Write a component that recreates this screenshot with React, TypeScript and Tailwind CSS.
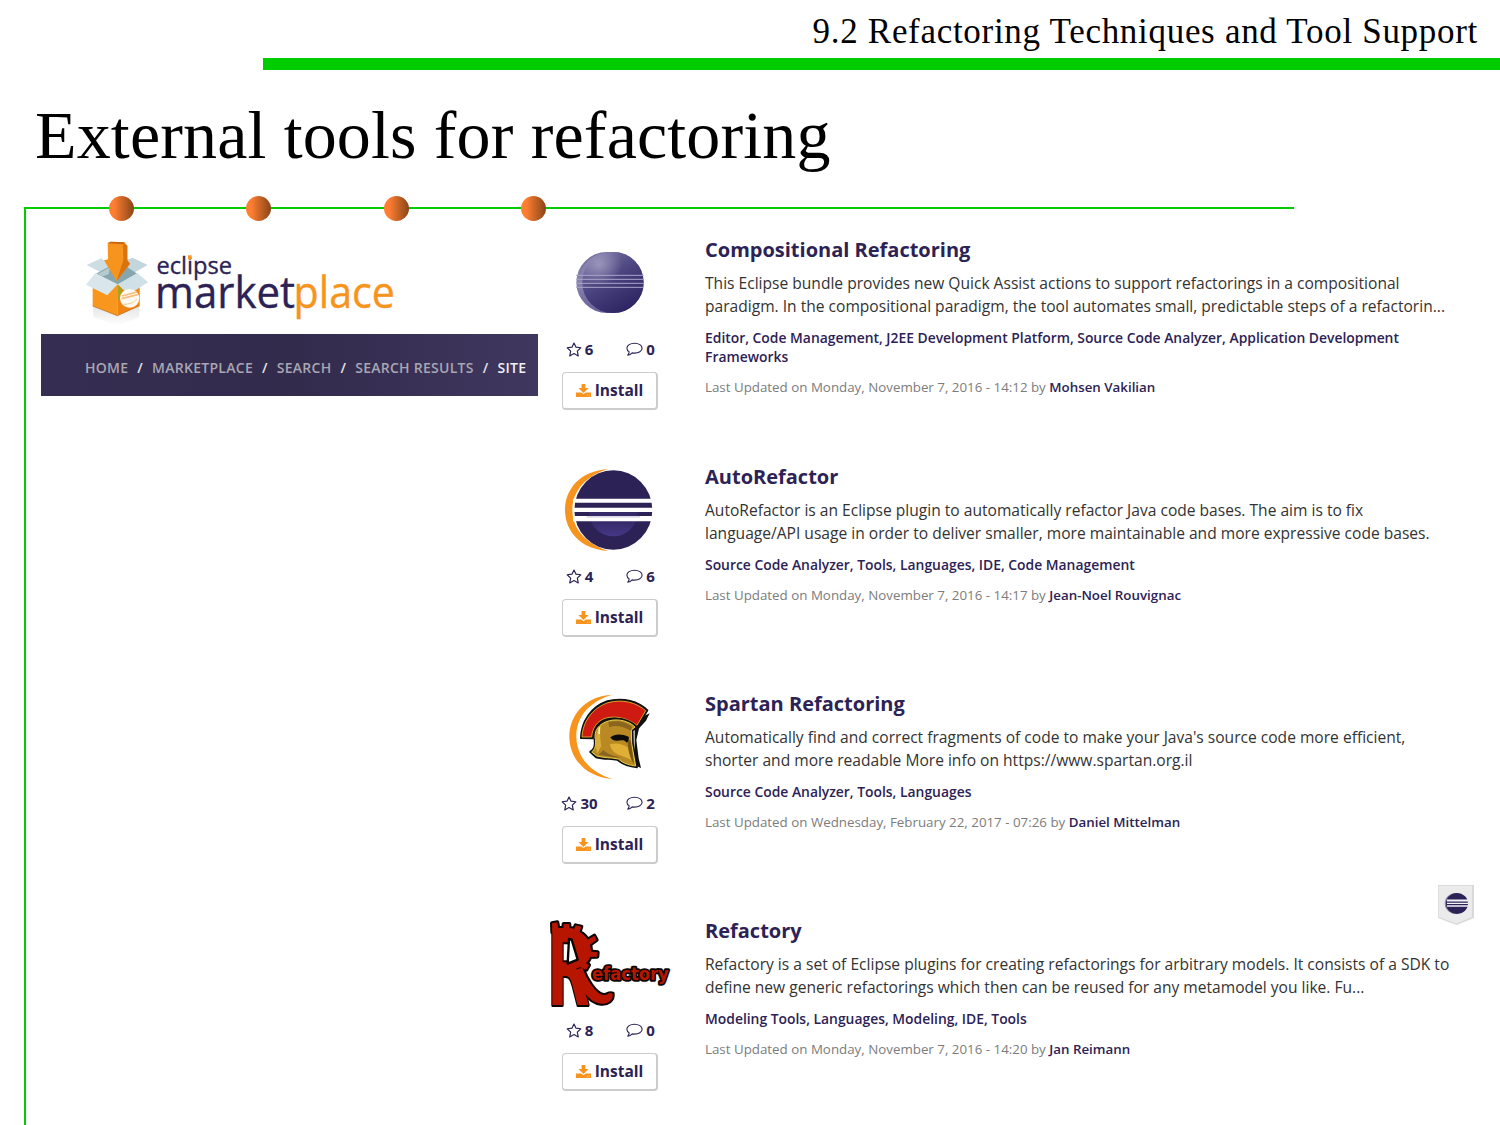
import type { ReactNode } from "react";

const StarIcon = () => (
  <svg viewBox="0 0 15 14" className="h-[15px] w-4" fill="none" stroke="#2c2255" strokeWidth="1.1" strokeLinejoin="round">
    <path d="M7.5 0.9 L9.4 4.8 L13.9 5.4 L10.6 8.5 L11.5 13 L7.5 10.8 L3.5 13 L4.4 8.5 L1.1 5.4 L5.6 4.8 Z" />
  </svg>
);

const CommentIcon = () => (
  <svg viewBox="0 0 17 14" className="h-[14px] w-[17px]" fill="none" stroke="#2c2255" strokeWidth="1.1" strokeLinejoin="round">
    <path d="M8.5 1.2 C12.8 1.2 16.1 3.4 16.1 6.2 C16.1 9 12.8 11.1 8.5 11.1 C7.7 11.1 6.9 11 6.2 10.9 C5 12.2 3.6 13 1.8 13.2 C2.6 12.2 3.1 11.2 3.2 9.9 C1.7 8.9 0.9 7.7 0.9 6.2 C0.9 3.4 4.2 1.2 8.5 1.2 Z" />
  </svg>
);

const DownloadIcon = () => (
  <svg viewBox="0 0 15 13" className="h-[13px] w-[15px]" fill="#f7941e">
    <path d="M5.6 0 H9.4 V4 H12.6 L7.5 9 L2.4 4 H5.6 Z" />
    <path d="M0 8.4 H5.4 L7.5 10.2 L9.6 8.4 H15 V13 H0 Z" />
    <path d="M10.9 10.8 h0.8 v0.8 h-0.8 z M12.9 10.8 h0.8 v0.8 h-0.8 z" fill="#fff" />
  </svg>
);

const CompositionalLogo = () => (
  <svg viewBox="12 9 366 300" className="h-[100px] w-[122px]">
    <defs>
      <linearGradient id="orb" x1="0.15" y1="0" x2="0.75" y2="1">
        <stop offset="0" stopColor="#7d78a6" />
        <stop offset="0.45" stopColor="#4b4580" />
        <stop offset="1" stopColor="#2b2160" />
      </linearGradient>
      <radialGradient id="orbShine" cx="0.32" cy="0.2" r="0.35">
        <stop offset="0" stopColor="#aaa6c8" stopOpacity="0.75" />
        <stop offset="1" stopColor="#aaa6c8" stopOpacity="0" />
      </radialGradient>
      <linearGradient id="orbEdge" x1="0" y1="0" x2="0" y2="1">
        <stop offset="0" stopColor="#6d6899" />
        <stop offset="0.5" stopColor="#8884ae" />
        <stop offset="1" stopColor="#67619b" />
      </linearGradient>
    </defs>
    <rect x="94" y="51" width="202" height="183" rx="92" ry="91" fill="url(#orbEdge)" />
    <rect x="112" y="51" width="184" height="183" rx="90" ry="91" fill="url(#orb)" />
    <rect x="100" y="51" width="196" height="183" rx="94" ry="91" fill="url(#orbShine)" />
    <path d="M93 121 H296 M93 133 H297 M93 145 H297 M93 157 H296" stroke="#a9a5c9" strokeWidth="3" />
  </svg>
);

const AutoRefactorLogo = () => (
  <svg viewBox="12 15 366 300" className="h-[100px] w-[122px]">
    <defs>
      <linearGradient id="core" x1="0" y1="0" x2="0" y2="1">
        <stop offset="0.4" stopColor="#352a68" />
        <stop offset="1" stopColor="#473788" />
      </linearGradient>
    </defs>
    <path d="M190 27 C105 32 60 88 60 150 S105 268 190 273 C125 252 82 208 82 150 S125 46 190 27 Z" fill="#f7941e" />
    <ellipse cx="205" cy="150" rx="117" ry="119" fill="#2c2255" />
    <path d="M132 156 A73 73 0 0 0 278 156 Z" fill="url(#core)" />
    <path d="M84 116 H325 V128 H84 Z M84 143 H325 V156 H84 Z M84 168 H325 V184 H84 Z" fill="#fff" />
    <path d="M125 168 H285 V173 H125 Z" fill="#dcdae6" />
  </svg>
);

const SpartanLogo = () => (
  <svg viewBox="12 21 366 300" className="h-[100px] w-[122px]">
    <path d="M202 29 C120 32 73 92 73 155 S120 276 202 282 C135 262 95 215 94 155 S135 48 202 29 Z" fill="#f7941e" />
    <g transform="translate(45 15)" strokeLinejoin="round">
      <path d="M228 112 L252 78 L269 70 L258 92 L236 116 Z" fill="#111" />
      <path d="M224 112 L238 112 L229 150 L236 205 L243 234 L224 226 Z" fill="#111" />
      <path d="M62 145 C63 95 92 50 142 33 C190 20 236 34 263 61 L232 112 C205 90 170 80 140 88 C112 97 99 120 99 146 Z" fill="#111" stroke="#111" strokeWidth="4" />
      <path d="M66 141 C68 97 95 55 144 38 C188 26 230 38 257 62 L231 106 C205 86 170 76 138 84 C110 93 97 115 95 141 Z" fill="#cf1a12" stroke="#e2bd33" strokeWidth="2.5" />
      <path d="M102 140 C101 108 128 90 160 86 C192 84 218 96 231 112 L218 122 L219 160 L231 232 C215 230 190 226 172 210 C152 206 132 208 108 202 L90 186 C100 180 108 172 102 140 Z" fill="#111" stroke="#111" strokeWidth="5" />
      <path d="M105 140 C104 112 128 94 160 90 C190 88 212 98 225 111 L214 120 L215 160 L227 228 C212 226 192 222 175 207 C152 202 132 204 110 198 L95 186 C104 180 110 166 105 140 Z" fill="#b98a24" stroke="#ead04a" strokeWidth="3" />
      <path d="M125 102 C118 120 120 145 124 168 L112 190 C106 170 104 120 125 102 Z" fill="#dcae37" />
      <path d="M145 96 C170 90 200 96 216 110 L212 122 C190 108 166 104 148 112 Z" fill="#8a6520" />
      <path d="M150 162 C170 158 186 160 203 172 L216 210 L180 196 C164 190 152 180 150 162 Z" fill="#dfb035" />
      <path d="M203 150 L212 152 L222 222 C210 205 203 180 203 150 Z" fill="#7b5618" />
      <path d="M130 180 C145 196 165 196 182 204 L150 200 L116 194 Z" fill="#8a6520" />
      <path d="M116 112 l4 0 l0 20 l-5 0 z" fill="#fff3c0" />
      <path d="M151 142 C163 132 182 130 206 140 C208 148 205 154 200 158 C192 146 180 152 170 152 C162 152 156 150 151 142 Z" fill="#0c0c0c" />
    </g>
  </svg>
);

const GearR = () => (
  <>
    <path d="M21 25 L37 22 L42 52 L22 52 Z M56 27 L73 27 L73 50 L54 50 Z M92 31 L109 35 L100 62 L82 54 Z M118 80 L148 62 L155 75 L126 96 Z M122 108 L158 112 L157 125 L122 126 Z M108 136 L132 150 L124 164 L98 154 Z" />
    <path d="M72 44 C112 44 136 72 138 106 C139 130 126 150 98 160 L92 146 C104 136 106 120 104 100 C102 80 96 66 72 62 Z" />
    <text transform="translate(7 270) scale(0.52 1)" fontFamily="DejaVu Sans" fontWeight="700" fontSize="318">R</text>
    <path d="M84 166 L112 158 C124 190 150 236 176 240 C188 242 190 230 203 236 C206 256 188 268 168 266 C128 262 104 216 84 166 Z" />
  </>
);

const RefactoryLogo = () => (
  <svg viewBox="12 12 366 300" className="h-[100px] w-[122px] overflow-visible">
    <g fill="#0b0605" stroke="#0b0605" strokeWidth="12" strokeLinejoin="round">
      <GearR />
      <text x="141" y="194" textLength="230" lengthAdjust="spacingAndGlyphs" fontFamily="DejaVu Sans" fontWeight="700" fontSize="51" strokeWidth="11">efactory</text>
    </g>
    <g fill="#b71500">
      <GearR />
      <path d="M72 72 L80 74 L98 134 L68 146 Z" fill="#fff" stroke="#0b0605" strokeWidth="7" strokeLinejoin="round" />
      <text x="141" y="194" textLength="230" lengthAdjust="spacingAndGlyphs" fontFamily="DejaVu Sans" fontWeight="700" fontSize="51">efactory</text>
    </g>
  </svg>
);

const Ribbon = () => (
  <svg viewBox="0 0 36 40" className="absolute -top-[34px] left-[889px] h-[40px] w-[36px]">
    <path d="M0 0 H36 V33 L18.5 40 L0 33 Z" fill="#d9d9d9" />
    <path d="M0.7 1 H34 V32 L18.5 38.5 L0.7 32 Z" fill="#ebebeb" />
    <ellipse cx="18" cy="18.5" rx="11.3" ry="10.5" fill="#8f8aaa" />
    <ellipse cx="19" cy="18.5" rx="11" ry="10.5" fill="#2c2255" />
    <path d="M9 14.5 H30 V16.5 H9 Z M9 17.8 H30 V19 H9 Z M9 20.3 H30 V21.8 H9 Z" fill="#f2f1f6" />
  </svg>
);

const MarketplaceLogo = () => (
  <svg viewBox="41 209 497 125" className="block h-[125px] w-[497px]">
    <defs>
      <linearGradient id="shade" x1="0" y1="0" x2="0" y2="1">
        <stop offset="0" stopColor="#c9c9c9" />
        <stop offset="1" stopColor="#ffffff" />
      </linearGradient>
    </defs>
    <g transform="translate(70 235) scale(0.33333)">
      <path d="M70 214 L142 242 L208 212 V246 L142 272 L70 246 Z" fill="url(#shade)" opacity="0.5" />
      <path d="M50 90 L94 70 L122 92 L92 112 Z" fill="#cddde4" />
      <path d="M165 76 L188 68 L233 90 L192 113 L165 100 Z" fill="#c3d5dd" />
      <path d="M78 116 L122 92 L165 92 L202 116 L142 150 Z" fill="#86a6ae" />
      <path d="M84 116 L120 97 L116 118 L98 124 Z" fill="#b5cbd1" />
      <path d="M68 150 L142 148 V242 L68 213 Z" fill="#f8961d" />
      <path d="M142 148 L209 150 V212 L142 242 Z" fill="#ef8411" />
      <path d="M68 213 L142 242 L209 212" fill="none" stroke="#b8681c" strokeWidth="2" />
      <path d="M48 149 L76 114 L143 148 L112 181 Z" fill="#d9e7ed" />
      <path d="M143 148 L202 114 L234 142 L176 179 Z" fill="#cfe0e7" />
      <path d="M143 150 L158 166 L143 200 Z" fill="#a3a420" />
      <ellipse cx="179" cy="190" rx="29" ry="28" fill="#fffaf2" />
      <path d="M155 183 L202 171 M155 191 L203 179" stroke="#f9bd7c" strokeWidth="5" />
      <path d="M160 208 C174 208 194 204 200 192" stroke="#f7c58c" strokeWidth="3" fill="none" />
      <path d="M113 24 L122 20 L164 22 L172 32 V76 L180 86 L140 138 L102 76 L114 73 Z" fill="#f7941e" />
      <path d="M159 24 L172 32 V76 L180 86 L140 138 L160 76 Z" fill="#d9730f" />
      <path d="M122 20 L164 22 L160 28 L113 25 Z" fill="#c96410" />
    </g>
    <g fontFamily="Open Sans" fill="#2c2255" stroke="#2c2255" strokeWidth="0.35">
      <text x="156.5" y="274" fontSize="23.5" textLength="75.5" lengthAdjust="spacingAndGlyphs">eclipse</text>
      <rect x="188.2" y="255.5" width="3.2" height="3.6" fill="#f7941e" stroke="#f7941e" />
      <text x="155" y="307.5" fontSize="43.5" textLength="140" lengthAdjust="spacingAndGlyphs">market</text>
      <text x="293.5" y="307.5" fontSize="43.5" textLength="101.5" lengthAdjust="spacingAndGlyphs" fill="#f7941e" stroke="#f7941e">place</text>
    </g>
  </svg>
);

const crumbs = ["HOME", "MARKETPLACE", "SEARCH", "SEARCH RESULTS"];

type Tool = {
  title: string;
  lines: string[];
  tags: string[];
  updated: string;
  author: string;
  stars: number;
  comments: number;
  logo: ReactNode;
  ribbon?: boolean;
};

const tools: Tool[] = [
  {
    title: "Compositional Refactoring",
    lines: [
      "This Eclipse bundle provides new Quick Assist actions to support refactorings in a compositional",
      "paradigm. In the compositional paradigm, the tool automates small, predictable steps of a refactorin...",
    ],
    tags: [
      "Editor, Code Management, J2EE Development Platform, Source Code Analyzer, Application Development",
      "Frameworks",
    ],
    updated: "Monday, November 7, 2016 - 14:12",
    author: "Mohsen Vakilian",
    stars: 6,
    comments: 0,
    logo: <CompositionalLogo />,
  },
  {
    title: "AutoRefactor",
    lines: [
      "AutoRefactor is an Eclipse plugin to automatically refactor Java code bases. The aim is to fix",
      "language/API usage in order to deliver smaller, more maintainable and more expressive code bases.",
    ],
    tags: ["Source Code Analyzer, Tools, Languages, IDE, Code Management"],
    updated: "Monday, November 7, 2016 - 14:17",
    author: "Jean-Noel Rouvignac",
    stars: 4,
    comments: 6,
    logo: <AutoRefactorLogo />,
  },
  {
    title: "Spartan Refactoring",
    lines: [
      "Automatically find and correct fragments of code to make your Java's source code more efficient,",
      "shorter and more readable More info on https://www.spartan.org.il",
    ],
    tags: ["Source Code Analyzer, Tools, Languages"],
    updated: "Wednesday, February 22, 2017 - 07:26",
    author: "Daniel Mittelman",
    stars: 30,
    comments: 2,
    logo: <SpartanLogo />,
  },
  {
    title: "Refactory",
    lines: [
      "Refactory is a set of Eclipse plugins for creating refactorings for arbitrary models. It consists of a SDK to",
      "define new generic refactorings which then can be reused for any metamodel you like. Fu...",
    ],
    tags: ["Modeling Tools, Languages, Modeling, IDE, Tools"],
    updated: "Monday, November 7, 2016 - 14:20",
    author: "Jan Reimann",
    stars: 8,
    comments: 0,
    logo: <RefactoryLogo />,
    ribbon: true,
  },
];

const Entry = ({ tool }: { tool: Tool }) => (
  <article className="relative flex h-[227px] shrink-0 gap-[34px]">
    <div className="flex w-[122px] shrink-0 flex-col items-center">
      {tool.logo}
      <div className="grid h-[22px] w-full grid-cols-2 text-[15px] font-bold leading-[22px] text-[#2c2255]">
        <span className="flex items-center justify-center gap-[3px]">
          <StarIcon />
          {tool.stars}
        </span>
        <span className="flex items-center justify-center gap-[3px]">
          <CommentIcon />
          {tool.comments}
        </span>
      </div>
      <button className="mt-3 flex h-[38px] w-24 items-center justify-center gap-1 rounded-[4px] border border-r-2 border-b-2 border-[#cccccc] text-[15.5px] font-bold text-[#2c2255]">
        <DownloadIcon />
        Install
      </button>
    </div>
    <div className="whitespace-nowrap">
      <h2 className="pt-px text-[20px] font-bold leading-[22px] text-[#2c2255]">{tool.title}</h2>
      <div className="mt-[11px] text-[15.58px] leading-[22.5px] text-[#333333]">
        {tool.lines.map((line) => (
          <p key={line}>{line}</p>
        ))}
      </div>
      <div className="mt-[11px] text-[13.88px] font-semibold leading-[19px] text-[#2c2255]">
        {tool.tags.map((line) => (
          <p key={line}>{line}</p>
        ))}
      </div>
      <p className="mt-[11px] text-[13.33px] leading-5 text-[#7c7c7c]">
        Last Updated on {tool.updated} by <span className="font-semibold text-[#2c2255]">{tool.author}</span>
      </p>
    </div>
    {tool.ribbon && <Ribbon />}
  </article>
);

export default function App() {
  return (
    <div className="flex h-[1125px] w-[1500px] flex-col overflow-hidden bg-white font-['Open_Sans',sans-serif]">
      <header className="h-[58px] pr-[22px] text-right font-['Liberation_Serif',serif] text-[35px] leading-[63px] tracking-[0.7px] text-black">
        9.2 Refactoring Techniques and Tool Support
      </header>
      <div className="ml-[263px] h-3 shrink-0 bg-[#00cc00]" />
      <h1 className="h-[137px] shrink-0 pl-[35px] font-['Liberation_Serif',serif] text-[68px] leading-[131px] tracking-[0.15px] text-black">
        External tools for refactoring
      </h1>
      <main className="ml-6 flex grow flex-col border-l-2 border-[#00cc00]">
        <div className="relative h-0.5 w-[1268px] shrink-0 bg-[#00cc00]">
          <div className="absolute -top-[11px] left-[82.5px] flex gap-[112.5px]">
            {[0, 1, 2, 3].map((n) => (
              <span key={n} className="h-[25px] w-[25px] rounded-full bg-linear-to-r from-[#ff7f32] from-20% to-[#8a4518]" />
            ))}
          </div>
        </div>
        <div className="flex gap-[11px] pl-[15px]">
          <aside className="w-[497px] shrink-0">
            <MarketplaceLogo />
            <nav className="flex h-[62px] items-center gap-[9px] whitespace-nowrap bg-linear-to-r from-[#352e52] via-[#322b4c] via-50% to-[#40375f] pl-[44px] pt-[5px] text-[14px] font-semibold tracking-[0.27px] text-[#a9a6b3]">
              {crumbs.map((crumb) => (
                <span key={crumb} className="flex gap-[9px]">
                  {crumb}
                  <span className="text-[#e4e2ea]">/</span>
                </span>
              ))}
              <span className="text-[#f1f0f5]">SITE</span>
            </nav>
          </aside>
          <section className="flex flex-col pt-[29px]">
            {tools.map((tool) => (
              <Entry key={tool.title} tool={tool} />
            ))}
          </section>
        </div>
      </main>
    </div>
  );
}
